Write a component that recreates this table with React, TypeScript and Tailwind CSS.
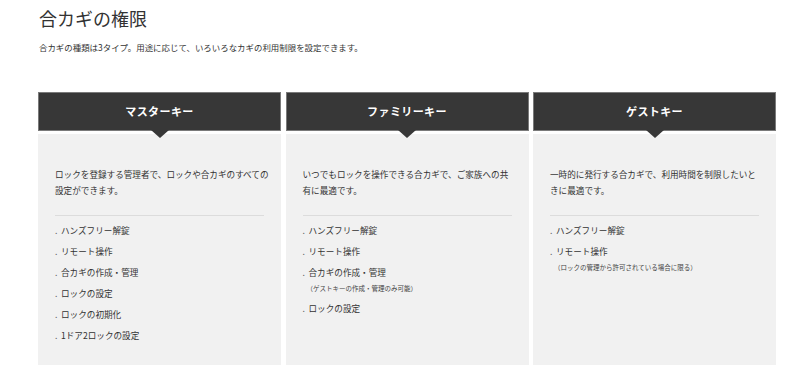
import React from "react";

type Item = { text: string; note?: string };
type Card = { title: string; desc: string[]; items: Item[] };

const cards: Card[] = [
  {
    title: "マスターキー",
    desc: ["ロックを登録する管理者で、ロックや合カギのすべての", "設定ができます。"],
    items: [
      { text: "ハンズフリー解錠" },
      { text: "リモート操作" },
      { text: "合カギの作成・管理" },
      { text: "ロックの設定" },
      { text: "ロックの初期化" },
      { text: "1ドア2ロックの設定" },
    ],
  },
  {
    title: "ファミリーキー",
    desc: ["いつでもロックを操作できる合カギで、ご家族への共", "有に最適です。"],
    items: [
      { text: "ハンズフリー解錠" },
      { text: "リモート操作" },
      { text: "合カギの作成・管理", note: "（ゲストキーの作成・管理のみ可能）" },
      { text: "ロックの設定" },
    ],
  },
  {
    title: "ゲストキー",
    desc: ["一時的に発行する合カギで、利用時間を制限したいと", "きに最適です。"],
    items: [
      { text: "ハンズフリー解錠" },
      { text: "リモート操作", note: "（ロックの管理から許可されている場合に限る）" },
    ],
  },
];

const font = { fontFamily: '"Noto Sans CJK JP", "Noto Sans", sans-serif' };

export default function App() {
  return (
    <div className="w-[800px] h-[391px] bg-white text-[#333] overflow-hidden" style={font}>
      <div className="pl-[39px] pt-[5px]">
        <h1 className="text-[18px] leading-[26px] font-normal text-[#333]">合カギの権限</h1>
        <p className="mt-[9px] text-[8.45px] leading-[14px] text-[#333]">
          合カギの種類は3タイプ。用途に応じて、いろいろなカギの利用制限を設定できます。
        </p>
      </div>
      <div className="ml-[38px] mt-[38px] w-[738px] grid grid-cols-3 gap-x-[4.5px]">
        {cards.map((c) => (
          <div key={c.title} className="flex flex-col">
            <div className="relative h-[39px] bg-[#373737] border border-[#7a7a7a] flex items-center justify-center">
              <span className="text-white text-[11px] font-bold tracking-[0.4px]">{c.title}</span>
              <div className="absolute left-1/2 -translate-x-1/2 top-full w-0 h-0 border-l-[9px] border-r-[9px] border-t-[8px] border-l-transparent border-r-transparent border-t-[#373737] z-10" />
            </div>
            <div className="mt-[3px] h-[231px] bg-[#f1f1f1] pt-[32px] pl-[17px] pr-[15px]">
              <div className="text-[8.6px] leading-[16px] whitespace-nowrap">
                {c.desc.map((l) => (
                  <div key={l}>{l}</div>
                ))}
              </div>
              <div className="mt-[17px] h-px bg-[#dcdcdc] mr-[2px]" />
              <div className="mt-[4px]">
                {c.items.map((it) => (
                  <div key={it.text}>
                    <div className="flex h-[21px] items-center text-[8.6px]">
                      <span className="w-[6px] text-[#666]">.</span>
                      <span>{it.text}</span>
                    </div>
                    {it.note && (
                      <div className="pl-[4px] text-[6.5px] leading-[10px] mb-[5px] text-[#444]">{it.note}</div>
                    )}
                  </div>
                ))}
              </div>
            </div>
          </div>
        ))}
      </div>
    </div>
  );
}
